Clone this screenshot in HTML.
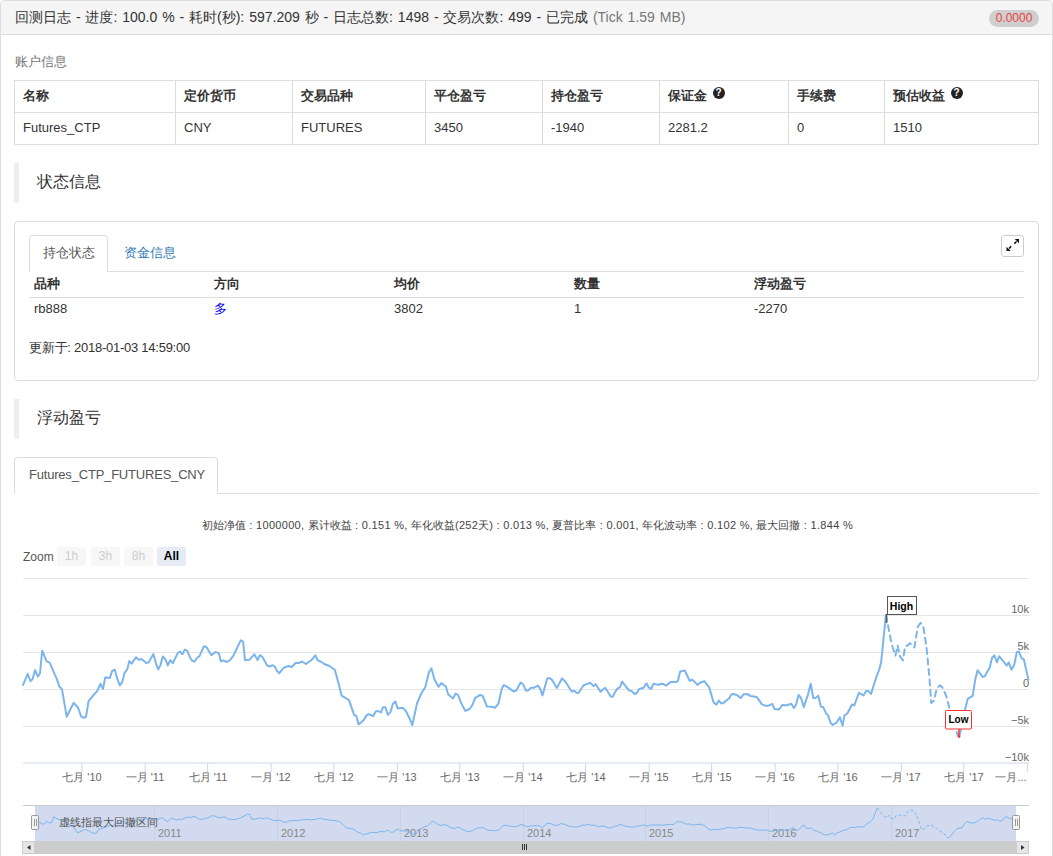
<!DOCTYPE html>
<html><head><meta charset="utf-8">
<style>
*{box-sizing:border-box}
html,body{margin:0;padding:0;background:#fff;width:1053px;height:856px;overflow:hidden}
body{font-family:"Liberation Sans",sans-serif;font-size:14px;color:#333;position:relative}
.a{position:absolute;white-space:nowrap}
#panel{position:absolute;left:0;top:0;width:1053px;height:900px;border:1px solid #ddd;border-radius:4px}
#hdr{position:absolute;left:1px;top:1px;width:1051px;height:34px;background:#f5f5f5;border-bottom:1px solid #ddd;border-radius:3px 3px 0 0}
.badge{position:absolute;left:989px;top:10px;width:50px;height:17px;border-radius:9px;background:#cfcfcf;color:#e8423f;font-size:12px;line-height:17px;text-align:center}
table.acc{position:absolute;left:14px;top:80px;border-collapse:collapse;width:1024px;table-layout:fixed}
table.acc td,table.acc th{border:1px solid #ddd;height:32px;padding:0 8px 2px 8px;font-size:13px;text-align:left;vertical-align:middle}
table.acc th{font-weight:bold}
.bq{position:absolute;left:14px;width:5px;height:40px;background:#eee}
.bqt{position:absolute;left:37px;font-size:16px;color:#333}
.box{position:absolute;left:14px;top:221px;width:1025px;height:160px;border:1px solid #ddd;border-radius:4px}
.tabline{position:absolute;height:1px;background:#ddd}
.tab{position:absolute;border:1px solid #ddd;border-bottom:none;border-radius:4px 4px 0 0;background:#fff}
.qi{display:inline-block;width:12px;height:12px;border-radius:50%;background:#222;color:#fff;font-size:10px;line-height:12px;text-align:center;font-weight:bold;vertical-align:3.5px;margin-left:2px}
.hc{font-family:"Liberation Sans",sans-serif}
.hc i{font-style:normal;letter-spacing:.3px}
.zb{position:absolute;top:547px;height:19px;width:29px;background:#f7f7f7;color:#ccc;font-size:12px;line-height:19px;text-align:center;font-weight:normal;border-radius:2px}
</style></head><body>
<div id="panel"></div>
<div id="hdr"></div>
<div class="a" style="left:15px;top:9px;font-size:14px;line-height:16px;color:#333;word-spacing:1px">回测日志 - 进度: 100.0 % - 耗时(秒): 597.209 秒 - 日志总数: 1498 - 交易次数: 499 - 已完成 <span style="color:#777">(Tick 1.59 MB)</span></div>
<div class="badge">0.0000</div>

<div class="a" style="left:15px;top:54px;font-size:13px;line-height:16px;color:#777">账户信息</div>
<table class="acc">
<colgroup><col style="width:161px"><col style="width:117px"><col style="width:133px"><col style="width:117px"><col style="width:117px"><col style="width:129px"><col style="width:96px"><col style="width:154px"></colgroup>
<tr><th>名称</th><th>定价货币</th><th>交易品种</th><th>平仓盈亏</th><th>持仓盈亏</th><th>保证金 <span class="qi">?</span></th><th>手续费</th><th>预估收益 <span class="qi">?</span></th></tr>
<tr><td>Futures_CTP</td><td>CNY</td><td>FUTURES</td><td>3450</td><td>-1940</td><td>2281.2</td><td>0</td><td>1510</td></tr>
</table>

<div class="bq" style="top:163px"></div>
<div class="a bqt" style="top:173px;line-height:18px">状态信息</div>

<div class="box"></div>
<div class="tab" style="left:29px;top:235px;width:79px;height:37px"></div>
<div class="tabline" style="left:29px;top:271px;width:995px"></div>
<div class="a" style="left:30px;top:271px;width:77px;height:1px;background:#fff"></div>
<div class="a" style="left:43px;top:245px;font-size:13px;line-height:16px;color:#555">持仓状态</div>
<div class="a" style="left:124px;top:245px;font-size:13px;line-height:16px;color:#337ab7">资金信息</div>
<div class="a" style="left:1001px;top:235px;width:23px;height:22px;border:1px solid #ccc;border-radius:3px;background:#fff">
<svg width="21" height="20" viewBox="0 0 21 20" style="position:absolute;left:0;top:0"><path d="M7 12.5 L9.2 10.3 M12.3 7.7 L14.5 5.5" stroke="#111" stroke-width="1.6"/><path d="M4.5 15 L4.5 10.8 L8.7 15 Z M17 3 L17 7.2 L12.8 3 Z" fill="#111"/></svg>
</div>
<div class="a" style="left:34px;top:276px;font-size:13px;line-height:16px;font-weight:bold">品种</div>
<div class="a" style="left:214px;top:276px;font-size:13px;line-height:16px;font-weight:bold">方向</div>
<div class="a" style="left:394px;top:276px;font-size:13px;line-height:16px;font-weight:bold">均价</div>
<div class="a" style="left:574px;top:276px;font-size:13px;line-height:16px;font-weight:bold">数量</div>
<div class="a" style="left:754px;top:276px;font-size:13px;line-height:16px;font-weight:bold">浮动盈亏</div>
<div class="tabline" style="left:29px;top:297px;width:995px"></div>
<div class="a" style="left:34px;top:301px;font-size:13px;line-height:16px">rb888</div>
<div class="a" style="left:214px;top:301px;font-size:13px;line-height:16px;color:#00f">多</div>
<div class="a" style="left:394px;top:301px;font-size:13px;line-height:16px">3802</div>
<div class="a" style="left:574px;top:301px;font-size:13px;line-height:16px">1</div>
<div class="a" style="left:754px;top:301px;font-size:13px;line-height:16px">-2270</div>
<div class="a" style="left:29px;top:340px;font-size:13px;line-height:16px;letter-spacing:-0.25px">更新于: 2018-01-03 14:59:00</div>

<div class="bq" style="top:399px"></div>
<div class="a bqt" style="top:409px;line-height:18px">浮动盈亏</div>

<div class="tab" style="left:14px;top:457px;width:204px;height:37px"></div>
<div class="tabline" style="left:14px;top:493px;width:1025px"></div>
<div class="a" style="left:15px;top:493px;width:202px;height:1px;background:#fff"></div>
<div class="a" style="left:29px;top:467px;font-size:13px;line-height:16px;color:#555;letter-spacing:-0.2px">Futures_CTP_FUTURES_CNY</div>

<div class="a hc" style="left:202px;top:518px;font-size:11px;line-height:14px;color:#444">初始净值<i> : 1000000, </i>累计收益<i> : 0.151 %, </i>年化收益<i>(252</i>天<i>) : 0.013 %, </i>夏普比率<i> : 0.001, </i>年化波动率<i> : 0.102 %, </i>最大回撤<i> : 1.844 %</i></div>

<div class="a hc" style="left:23px;top:550px;font-size:12px;line-height:14px;color:#555">Zoom</div>
<div class="zb" style="left:57px">1h</div>
<div class="zb" style="left:91px">3h</div>
<div class="zb" style="left:124px">8h</div>
<div class="zb" style="left:157px;background:#e6ebf5;color:#000;font-weight:bold">All</div>

<svg class="a" style="left:0;top:0" width="1053" height="856" viewBox="0 0 1053 856">
<g stroke="#e6e6e6" stroke-width="1">
<line x1="23" y1="578.5" x2="1029" y2="578.5"/>
<line x1="23" y1="615.5" x2="1029" y2="615.5"/>
<line x1="23" y1="652.5" x2="1029" y2="652.5"/>
<line x1="23" y1="689.5" x2="1029" y2="689.5"/>
<line x1="23" y1="726.5" x2="1029" y2="726.5"/>
</g>
<line x1="23" y1="763" x2="1029" y2="763" stroke="#ccd6eb" stroke-width="1"/>
<g stroke="#ccd6eb" stroke-width="1">
<line x1="81.9" y1="763" x2="81.9" y2="772"/>
<line x1="145.2" y1="763" x2="145.2" y2="772"/>
<line x1="207.6" y1="763" x2="207.6" y2="772"/>
<line x1="271.1" y1="763" x2="271.1" y2="772"/>
<line x1="333.9" y1="763" x2="333.9" y2="772"/>
<line x1="397.4" y1="763" x2="397.4" y2="772"/>
<line x1="459.8" y1="763" x2="459.8" y2="772"/>
<line x1="523.3" y1="763" x2="523.3" y2="772"/>
<line x1="585.7" y1="763" x2="585.7" y2="772"/>
<line x1="649.2" y1="763" x2="649.2" y2="772"/>
<line x1="711.6" y1="763" x2="711.6" y2="772"/>
<line x1="775.1" y1="763" x2="775.1" y2="772"/>
<line x1="837.9" y1="763" x2="837.9" y2="772"/>
<line x1="901.4" y1="763" x2="901.4" y2="772"/>
<line x1="963.8" y1="763" x2="963.8" y2="772"/>
<line x1="1027.3" y1="763" x2="1027.3" y2="772"/>
</g>
<g font-family="Liberation Sans" font-size="11" fill="#666" text-anchor="middle">
<text x="82" y="781">七月 '10</text>
<text x="145" y="781">一月 '11</text>
<text x="208" y="781">七月 '11</text>
<text x="271" y="781">一月 '12</text>
<text x="334" y="781">七月 '12</text>
<text x="397" y="781">一月 '13</text>
<text x="460" y="781">七月 '13</text>
<text x="523" y="781">一月 '14</text>
<text x="586" y="781">七月 '14</text>
<text x="649" y="781">一月 '15</text>
<text x="712" y="781">七月 '15</text>
<text x="775" y="781">一月 '16</text>
<text x="838" y="781">七月 '16</text>
<text x="901" y="781">一月 '17</text>
<text x="964" y="781">七月 '17</text>
<text x="1011" y="781">一月...</text>
</g>
<g font-family="Liberation Sans" font-size="11" fill="#666" text-anchor="end">
<text x="1029" y="613">10k</text>
<text x="1029" y="650">5k</text>
<text x="1029" y="687">0</text>
<text x="1029" y="724">−5k</text>
<text x="1029" y="761">−10k</text>
</g>
<polyline points="23.1,684.9 27.7,673.8 30.5,681.2 32.6,679.1 35.1,670.1 37.9,676.7 40.0,673.2 42.2,650.7 46.5,661.1 49.6,662.7 57.0,679.4 59.3,686.5 62.0,689.3 66.7,716.7 73.7,702.8 78.0,707.5 81.1,716.4 83.6,717.9 86.0,716.8 88.5,701.4 94.1,694.4 97.2,691.1 100.5,683.7 103.0,689.0 105.2,677.5 109.9,677.9 112.3,670.7 114.8,669.8 117.5,679.4 119.8,685.3 122.2,682.1 124.7,672.6 127.2,669.5 129.3,661.1 131.7,663.6 136.0,657.2 139.1,659.9 141.6,659.0 146.2,663.1 148.7,662.2 153.4,654.0 156.1,663.8 158.3,669.4 160.4,665.1 162.9,656.4 165.4,659.3 167.8,665.4 170.3,660.1 172.8,663.2 177.7,653.1 180.2,651.5 182.3,654.3 184.8,649.6 187.2,650.6 190.1,657.7 191.9,660.5 194.4,661.7 196.9,658.0 199.3,656.4 204.0,646.2 206.7,647.4 211.4,655.2 215.4,651.9 218.8,653.1 220.9,661.4 223.4,660.5 227.1,662.0 230.2,659.8 233.3,655.8 240.7,640.4 243.1,641.6 245.0,660.1 249.3,659.8 254.3,654.3 257.6,660.1 259.8,655.2 262.3,656.8 267.2,665.4 269.9,666.7 272.5,665.2 274.7,666.4 276.8,670.7 279.3,673.2 281.7,670.1 283.8,667.7 288.5,666.0 291.6,667.0 295.9,662.7 298.4,663.1 302.1,661.5 305.8,664.0 311.4,660.2 315.4,655.3 317.5,660.2 320.6,661.5 324.3,664.0 329.3,666.0 334.8,669.8 338.5,683.1 341.6,695.7 349.0,700.1 354.0,714.6 356.4,716.2 358.6,724.4 363.8,719.9 366.9,714.9 368.8,714.2 373.1,716.2 375.9,711.2 378.6,711.2 380.9,712.5 383.0,707.2 385.4,707.2 387.9,714.9 390.4,712.1 392.8,704.1 395.3,701.4 397.7,708.4 402.4,707.8 405.5,710.2 409.2,717.7 412.3,725.1 417.0,703.5 421.5,693.0 425.2,687.4 429.0,672.0 431.4,668.3 434.5,679.4 438.5,686.8 441.3,683.1 445.9,686.5 448.1,694.2 453.0,698.5 455.5,693.6 458.0,694.8 461.0,702.8 465.4,710.9 469.7,709.0 472.2,705.3 475.2,697.9 480.2,694.8 482.7,696.0 487.0,706.5 491.9,706.8 495.0,707.8 498.5,703.5 501.8,688.6 503.9,685.0 508.0,687.4 513.5,691.5 516.2,690.5 520.7,682.5 523.1,684.3 525.9,690.5 528.0,690.5 531.1,687.8 533.6,687.8 537.9,685.6 540.4,689.3 542.5,695.4 547.2,678.4 549.6,677.9 552.1,680.0 556.8,688.0 562.0,678.4 565.1,681.2 571.9,691.7 574.1,690.7 576.8,693.0 578.6,692.7 583.6,685.3 586.7,684.1 590.4,682.8 593.5,686.2 595.6,684.1 600.5,691.7 605.2,687.8 610.7,696.4 612.6,696.7 616.9,689.0 619.8,687.4 622.2,681.6 626.2,687.0 629.3,690.5 631.7,691.1 634.6,694.0 636.7,693.0 639.1,689.0 643.7,687.8 646.5,683.3 648.7,687.4 651.2,689.0 653.6,683.7 658.6,684.9 661.0,683.7 663.5,684.1 666.0,685.6 670.9,681.9 675.2,682.1 677.7,681.6 680.2,671.4 684.8,670.5 689.7,680.9 691.9,679.6 694.4,681.6 697.5,684.9 699.9,682.8 704.3,681.2 709.2,687.4 713.5,702.2 716.4,704.7 718.8,700.6 721.5,703.5 723.4,703.1 725.2,701.4 729.0,698.5 731.4,694.4 733.6,694.0 737.6,695.4 740.7,698.1 743.8,694.2 746.9,694.0 750.6,696.0 756.7,696.9 761.7,704.1 764.8,705.6 767.8,705.9 772.3,704.0 774.6,709.1 779.1,709.5 782.2,705.0 786.7,705.3 791.3,703.7 794.0,708.0 796.1,704.5 798.6,694.9 801.1,698.0 803.7,707.1 808.0,694.6 810.7,683.7 813.3,698.0 815.6,698.0 818.3,695.8 820.9,706.8 823.2,707.1 825.9,713.2 827.7,714.7 830.5,722.7 832.6,725.0 836.8,722.3 839.9,717.4 842.6,725.8 844.4,715.6 847.5,713.2 852.0,704.5 854.3,705.3 858.9,692.8 863.4,695.4 866.5,690.8 868.7,691.3 871.0,693.9 876.3,677.2 879.1,670.0 881.2,662.0 885.9,614.9" fill="none" stroke="#7cb5ec" stroke-width="2" stroke-linejoin="round" stroke-linecap="round"/>
<polyline points="885.9,614.9 887.9,625.0 891.8,644.7 895.4,655.7 897.7,645.5 899.7,655.7 902.9,660.4 905.2,646.3 907.6,645.5 909.9,643.1 914.4,647.5 917.8,626.6 920.7,622.9 923.3,626.6 926.5,647.0 929.7,680.9 931.2,703.0 933.9,700.6 936.7,688.8 939.9,685.3 942.3,687.2 946.2,695.9 949.4,707.7 954.1,718.8 957.2,734.5 959.1,736.9" fill="none" stroke="#7cb5ec" stroke-width="2" stroke-linejoin="round" stroke-linecap="round" stroke-dasharray="6,4.5"/>
<polyline points="959.1,736.9 961.0,729.5 965.1,709.3 967.8,698.8 972.7,695.9 975.2,679.7 977.6,670.3 983.0,677.1 984.6,676.4 989.7,667.6 992.0,658.0 994.3,655.3 997.0,662.3 999.1,656.2 1006.8,665.6 1008.8,662.3 1011.5,669.7 1014.2,664.7 1016.8,652.2 1018.9,651.5 1021.6,658.2 1023.8,659.3 1028.3,679.1" fill="none" stroke="#7cb5ec" stroke-width="2" stroke-linejoin="round" stroke-linecap="round"/>
<!-- High flag -->
<line x1="886.5" y1="614" x2="886.5" y2="623" stroke="#555" stroke-width="1.5"/>
<rect x="887.5" y="596.5" width="29" height="18" fill="#fff" stroke="#555" stroke-width="1"/>
<text x="901.5" y="610" font-family="Liberation Sans" font-size="10.5" font-weight="bold" fill="#000" text-anchor="middle">High</text>
<!-- Low flag -->
<line x1="959" y1="729" x2="959" y2="736" stroke="#f33" stroke-width="1.5"/><circle cx="959" cy="736.5" r="1.3" fill="#f33"/>
<rect x="945.5" y="710.5" width="26" height="18.5" rx="1" fill="#fff" stroke="#f33" stroke-width="1"/>
<text x="958.5" y="723" font-family="Liberation Sans" font-size="10" font-weight="bold" fill="#000" text-anchor="middle">Low</text>

<!-- navigator -->
<line x1="23" y1="805.5" x2="1029" y2="805.5" stroke="#ccc" stroke-width="1"/>
<rect x="35" y="806" width="981" height="35" fill="#d1daee"/>
<g stroke="#c9d1e4" stroke-width="1">
<line x1="154.5" y1="805" x2="154.5" y2="841"/>
<line x1="277.5" y1="805" x2="277.5" y2="841"/>
<line x1="400.5" y1="805" x2="400.5" y2="841"/>
<line x1="523.5" y1="805" x2="523.5" y2="841"/>
<line x1="645.5" y1="805" x2="645.5" y2="841"/>
<line x1="768.5" y1="805" x2="768.5" y2="841"/>
<line x1="891.5" y1="805" x2="891.5" y2="841"/>
</g>
<g font-family="Liberation Sans" font-size="11" fill="#888">
<text x="158" y="837">2011</text>
<text x="281" y="837">2012</text>
<text x="404" y="837">2013</text>
<text x="527" y="837">2014</text>
<text x="649" y="837">2015</text>
<text x="772" y="837">2016</text>
<text x="895" y="837">2017</text>
</g>
<polyline points="35.1,825.1 39.6,822.4 42.3,824.2 44.4,823.7 46.8,821.5 49.5,823.1 51.6,822.3 53.7,816.8 57.9,819.3 61.0,819.7 68.2,823.8 70.4,825.5 73.1,826.2 77.7,832.9 84.5,829.5 88.7,830.7 91.7,832.9 94.2,833.2 96.5,833.0 98.9,829.2 104.4,827.5 107.4,826.7 110.6,824.9 113.1,826.2 115.2,823.3 119.8,823.4 122.2,821.7 124.6,821.5 127.2,823.8 129.5,825.2 131.8,824.5 134.3,822.1 136.7,821.4 138.8,819.3 141.1,819.9 145.3,818.4 148.3,819.0 150.8,818.8 155.3,819.8 157.7,819.6 162.3,817.6 164.9,820.0 167.1,821.4 169.1,820.3 171.6,818.2 174.0,818.9 176.3,820.4 178.8,819.1 181.2,819.8 186.0,817.4 188.4,817.0 190.5,817.7 192.9,816.5 195.3,816.7 198.1,818.5 199.9,819.2 202.3,819.5 204.7,818.6 207.1,818.2 211.7,815.7 214.3,816.0 218.9,817.9 222.8,817.1 226.1,817.4 228.2,819.4 230.6,819.2 234.2,819.5 237.3,819.0 240.3,818.0 247.5,814.2 249.8,814.5 251.7,819.1 255.9,819.0 260.8,817.7 264.0,819.1 266.1,817.9 268.6,818.3 273.4,820.4 276.0,820.7 278.5,820.3 280.7,820.6 282.7,821.7 285.2,822.3 287.5,821.5 289.6,820.9 294.2,820.5 297.2,820.8 301.4,819.7 303.8,819.8 307.4,819.4 311.0,820.0 316.5,819.1 320.4,817.9 322.5,819.1 325.5,819.4 329.1,820.0 334.0,820.5 339.4,821.5 343.0,824.7 346.0,827.8 353.2,828.9 358.1,832.4 360.4,832.8 362.6,834.8 367.7,833.7 370.7,832.5 372.5,832.3 376.7,832.8 379.5,831.6 382.1,831.6 384.4,831.9 386.4,830.6 388.7,830.6 391.2,832.5 393.6,831.8 396.0,829.9 398.4,829.2 400.8,830.9 405.3,830.8 408.4,831.3 412.0,833.2 415.0,835.0 419.6,829.7 424.0,827.1 427.6,825.8 431.3,822.0 433.6,821.1 436.7,823.8 440.6,825.6 443.3,824.7 447.8,825.5 449.9,827.4 454.7,828.5 457.2,827.3 459.6,827.6 462.5,829.5 466.8,831.5 471.0,831.1 473.5,830.1 476.4,828.3 481.3,827.6 483.7,827.9 487.9,830.4 492.7,830.5 495.7,830.8 499.1,829.7 502.4,826.1 504.4,825.2 508.4,825.8 513.8,826.8 516.4,826.5 520.8,824.6 523.2,825.0 525.9,826.5 527.9,826.5 531.0,825.9 533.4,825.9 537.6,825.3 540.0,826.2 542.1,827.7 546.7,823.6 549.0,823.4 551.5,823.9 556.1,825.9 561.1,823.6 564.2,824.2 570.8,826.8 572.9,826.6 575.6,827.1 577.3,827.1 582.2,825.2 585.2,825.0 588.9,824.6 591.9,825.5 593.9,825.0 598.7,826.8 603.3,825.9 608.7,828.0 610.5,828.0 614.7,826.2 617.5,825.8 619.9,824.3 623.8,825.7 626.8,826.5 629.2,826.7 632.0,827.4 634.0,827.1 636.4,826.2 640.9,825.9 643.6,824.8 645.8,825.8 648.2,826.2 650.5,824.9 655.4,825.1 657.8,824.9 660.2,825.0 662.6,825.3 667.4,824.4 671.6,824.5 674.1,824.3 676.5,821.8 681.0,821.6 685.8,824.2 687.9,823.9 690.4,824.3 693.4,825.1 695.7,824.6 700.0,824.2 704.8,825.8 709.0,829.4 711.8,830.0 714.2,829.0 716.8,829.7 718.7,829.6 720.4,829.2 724.1,828.5 726.5,827.5 728.6,827.4 732.5,827.7 735.6,828.4 738.6,827.4 741.6,827.4 745.2,827.9 751.2,828.1 756.1,829.9 759.1,830.2 762.0,830.3 766.4,829.8 768.7,831.1 773.0,831.2 776.1,830.1 780.5,830.1 785.0,829.8 787.6,830.8 789.6,830.0 792.1,827.6 794.5,828.4 797.1,830.6 801.3,827.5 803.9,824.9 806.4,828.4 808.7,828.4 811.3,827.8 813.8,830.5 816.1,830.6 818.7,832.1 820.5,832.5 823.2,834.4 825.3,835.0 829.4,834.3 832.4,833.1 835.0,835.2 836.8,832.7 839.8,832.1 844.2,830.0 846.4,830.1 850.9,827.1 855.3,827.7 858.4,826.6 860.5,826.7 862.7,827.4 867.9,823.3 870.7,821.5 872.7,819.5 877.3,808.0" fill="none" stroke="#7cb5ec" stroke-width="1"/><polyline points="877.3,808.0 879.2,810.5 883.1,815.3 886.6,818.0 888.8,815.5 890.8,818.0 893.9,819.1 896.1,815.7 898.5,815.5 900.7,814.9 905.1,816.0 908.4,810.9 911.3,810.0 913.8,810.9 916.9,815.9 920.0,824.2 921.5,829.6 924.1,829.0 926.9,826.1 930.0,825.2 932.3,825.7 936.2,827.8 939.3,830.7 943.9,833.5 946.9,837.3 948.7,837.9" fill="none" stroke="#7cb5ec" stroke-width="1" stroke-dasharray="3,2"/><polyline points="948.7,837.9 950.6,836.1 954.6,831.1 957.2,828.6 962.0,827.8 964.5,823.9 966.8,821.6 972.1,823.2 973.6,823.1 978.6,820.9 980.9,818.6 983.1,817.9 985.7,819.6 987.8,818.1 995.3,820.4 997.3,819.6 999.9,821.4 1002.5,820.2 1005.1,817.1 1007.1,817.0 1009.8,818.6 1011.9,818.9 1016.3,823.7" fill="none" stroke="#7cb5ec" stroke-width="1"/>
<text x="59" y="826" font-family="Liberation Sans" font-size="11" fill="#555">虚线指最大回撤区间</text>
<rect x="31.5" y="815.5" width="7" height="14" rx="1" fill="#f2f2f2" stroke="#999" stroke-width="1"/>
<line x1="34.5" y1="819" x2="34.5" y2="826" stroke="#999"/><line x1="36.5" y1="819" x2="36.5" y2="826" stroke="#999"/>
<rect x="1012.5" y="815.5" width="7" height="14" rx="1" fill="#f2f2f2" stroke="#999" stroke-width="1"/>
<line x1="1015.5" y1="819" x2="1015.5" y2="826" stroke="#999"/><line x1="1017.5" y1="819" x2="1017.5" y2="826" stroke="#999"/>
<!-- scrollbar -->
<rect x="22" y="841" width="1007" height="13" fill="#f2f2f2"/>
<rect x="35" y="841" width="981" height="13" fill="#cccccc"/>
<rect x="22.5" y="841.5" width="12" height="12" fill="#e6e6e6" stroke="#ccc" stroke-width="1"/>
<path d="M27 847.5 L30.5 845 L30.5 850 Z" fill="#333"/>
<rect x="1016.5" y="841.5" width="12" height="12" fill="#e6e6e6" stroke="#ccc" stroke-width="1"/>
<path d="M1024.5 847.5 L1021 845 L1021 850 Z" fill="#333"/>
<g stroke="#333" stroke-width="1"><line x1="522.5" y1="844" x2="522.5" y2="850"/><line x1="524.5" y1="844" x2="524.5" y2="850"/><line x1="526.5" y1="844" x2="526.5" y2="850"/></g>
</svg>
</body></html>
